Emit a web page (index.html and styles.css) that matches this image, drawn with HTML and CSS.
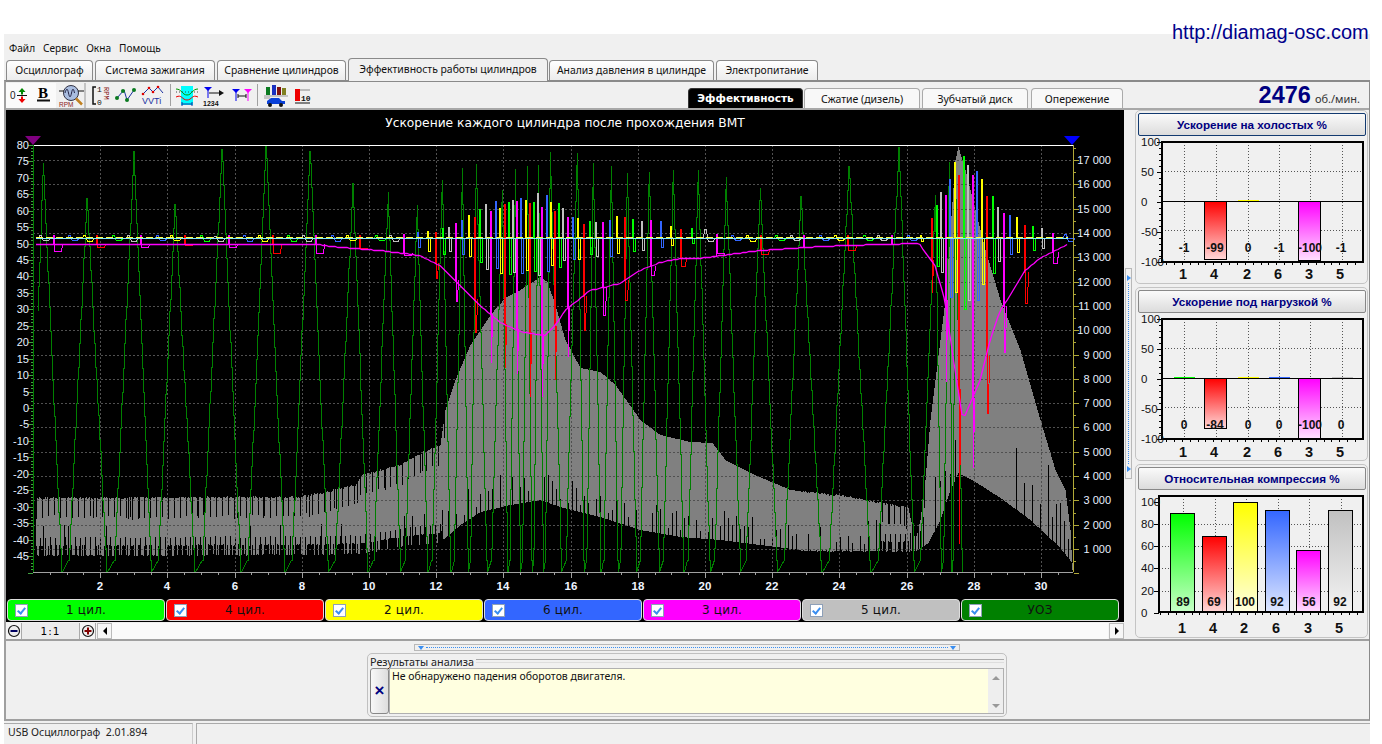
FILE: index.html
```html
<!DOCTYPE html>
<html lang="ru">
<head>
<meta charset="utf-8">
<title>USB Осциллограф</title>
<link rel="stylesheet" href="styles.css">
</head>
<body>
<div class="top-band"><a class="site-link">http://diamag-osc.com</a></div>
<div class="app">
  <nav class="menu"><span>Файл</span><span>Сервис</span><span>Окна</span><span>Помощь</span></nav>
  <div class="tabs">
    <span class="tab w-1">Осциллограф</span>
    <span class="tab w-2">Система зажигания</span>
    <span class="tab w-3">Сравнение цилиндров</span>
    <span class="tab tab-active w-4">Эффективность работы цилиндров</span>
    <span class="tab w-5">Анализ давления в цилиндре</span>
    <span class="tab w-6">Электропитание</span>
  </div>
  <div class="frame">
    <div class="toolbar">
      <div class="tools">
        <span class="tool tool-on w25"><svg width="25" height="24" viewBox="0 0 25 24"><text x="4" y="16" class="ic-num">0</text><path d="M11 12.5h10" class="ic-k"/><path d="M16 5l-3.5 4h2.5v2.5h2V9h2.500z" fill="#080"/><path d="M16 20l-3.5-4h2.500v-2.500h2V16h2.500z" fill="#e00"/></svg></span>
        <span class="tool tool-on w25"><svg width="25" height="24" viewBox="0 0 25 24"><text x="7" y="15" class="ic-b">B</text><path d="M6 17.500h13" class="ic-kk"/></svg></span>
        <span class="tool w30"><svg width="30" height="24" viewBox="0 0 30 24"><circle cx="15" cy="10" r="7.500" fill="#a9bde0" stroke="#334"/><path d="M9 10c1.500-5 2.500-5 3.500 0s2 5 3 0 2-5 3 0" fill="none" stroke="#224"/><path d="M3 8h5M22 8h6" class="ic-k"/><path d="M20 15.500l6 6" stroke="#c08020" stroke-width="2.500"/><text x="3" y="24" class="ic-rpm">RPM</text></svg></span>
        <span class="tool w27 tool-line"><svg width="27" height="24" viewBox="0 0 27 24"><path d="M10 4H7v17h3" fill="none" stroke="#111" stroke-width="1.500"/><text x="11" y="9" class="ic-small">1</text><text x="11" y="22" class="ic-small">0</text><text x="18" y="4" class="ic-rot" transform="rotate(90 18 4)">RPM</text></svg></span>
        <span class="tool w27"><svg width="27" height="24" viewBox="0 0 27 24"><path d="M4 15L11 7l3 10 7-10" fill="none" stroke="#1a30a0"/><circle cx="4" cy="15" r="2" fill="#0a7a20"/><circle cx="10" cy="8" r="2" fill="#0a7a20"/><circle cx="14" cy="17" r="2" fill="#0a7a20"/><circle cx="21" cy="7" r="2" fill="#0a7a20"/></svg></span>
        <span class="tool w27"><svg width="27" height="24" viewBox="0 0 27 24"><path d="M3 11l6-6 4 4 5-5 5 6" fill="none" stroke="#1a30a0"/><circle cx="3" cy="11" r="1.300" fill="#d00"/><circle cx="9" cy="5" r="1.300" fill="#d00"/><circle cx="13" cy="9" r="1.300" fill="#d00"/><circle cx="18" cy="4" r="1.300" fill="#d00"/><text x="2" y="21" class="ic-vvt">VVTi</text></svg></span>
        <span class="tool-sep"></span>
        <span class="tool w27"><svg width="27" height="24" viewBox="0 0 27 24"><rect x="8" y="3" width="12" height="19" fill="#0ff"/><path d="M3 6c6 0 6 6 11 6s5-6 11-6" fill="none" stroke="#090"/><path d="M3 14c6-3 6 3 11 3s5-6 11-3" fill="none" stroke="#e00"/><path d="M3 9h22" stroke="#444" stroke-dasharray="1 2"/><path d="M9 21h10M9 19v4M19 19v4" stroke="#1a30a0"/></svg></span>
        <span class="tool w27"><svg width="27" height="24" viewBox="0 0 27 24"><path d="M4 4h8l-4 4z" fill="#00e"/><path d="M8 5v10" stroke="#00e"/><path d="M9 10h11" class="ic-k"/><path d="M24 10l-5-3v6z" fill="#111"/><text x="3" y="23" class="ic-n1234">1234</text></svg></span>
        <span class="tool w27"><svg width="27" height="24" viewBox="0 0 27 24"><path d="M5 6h8l-4 4z" fill="#00e"/><path d="M9 7v11" stroke="#00e"/><path d="M17 6h8l-4 4z" fill="#f0f"/><path d="M21 7v11" stroke="#f0f"/><path d="M11 13h8M11 11v4M19 11v4" stroke="#111"/></svg></span>
        <span class="tool-sep"></span>
        <span class="tool w30"><svg width="30" height="24" viewBox="0 0 30 24"><rect x="6" y="4" width="4" height="8" fill="#0a7a20"/><rect x="12" y="2" width="4" height="10" fill="#1a30c0"/><rect x="17" y="4" width="4" height="8" fill="#801010"/><rect x="22" y="5" width="4" height="7" fill="#808020"/><path d="M4 13h24M4 15h6" stroke="#999"/><path d="M7 21v-3l4-3h8l3 3h3v3z" fill="#0a40d8"/><circle cx="10" cy="22" r="2" fill="#111"/><circle cx="21" cy="22" r="2" fill="#111"/></svg></span>
        <span class="tool w24"><svg width="24" height="24" viewBox="0 0 24 24"><rect x="5" y="6" width="5" height="12" fill="#e00"/><path d="M5 20h15" class="ic-k"/><path d="M10 7h10" stroke="#888"/><text x="11" y="18" class="ic-ten">10</text></svg></span>
      </div>
      <div class="subtabs">
        <span class="subtab subtab-active s-1">Эффективность</span>
        <span class="subtab s-2">Сжатие (дизель)</span>
        <span class="subtab s-3">Зубчатый диск</span>
        <span class="subtab s-4">Опережение</span>
      </div>
      <div class="rpm"><b>2476</b><span>об./мин.</span></div>
    </div>
    <div class="main">
      <div class="left">
        <div class="scope">
          <svg id="scope-chart" class="scope-svg" width="1118" height="489" viewBox="6 110 1118 489"></svg>
          <div class="series">
            <span class="ser c-green"><i class="check"></i><em>1 цил.</em></span>
            <span class="ser c-red"><i class="check"></i><em>4 цил.</em></span>
            <span class="ser c-yellow"><i class="check"></i><em>2 цил.</em></span>
            <span class="ser c-blue"><i class="check"></i><em>6 цил.</em></span>
            <span class="ser c-magenta"><i class="check"></i><em>3 цил.</em></span>
            <span class="ser c-gray"><i class="check"></i><em>5 цил.</em></span>
            <span class="ser c-dark"><i class="check"></i><em>УОЗ</em></span>
          </div>
        </div>
        <div class="scrollrow">
          <span class="zoom-btn"><svg width="14" height="14" viewBox="0 0 14 14"><circle cx="7" cy="7" r="5.500" class="z-ring"/><path d="M3.500 7h7" class="z-minus"/></svg></span>
          <span class="zoom-val">1:1</span>
          <span class="zoom-btn"><svg width="14" height="14" viewBox="0 0 14 14"><circle cx="7" cy="7" r="5.500" class="z-ring"/><path d="M3.500 7h7M7 3.500v7" class="z-plus"/></svg></span>
          <span class="arrow-btn"><i class="tri-left"></i></span>
          <span class="track"></span>
          <span class="arrow-btn"><i class="tri-right"></i></span>
        </div>
      </div>
      <div class="v-split"><i class="tri-blue-r"></i><span class="dots-v"></span><i class="tri-blue-r"></i></div>
      <div class="right">
        <section class="panel"><h3 class="panel-title panel-title-on">Ускорение на холостых %</h3><svg class="bars" id="bars-1" width="233" height="148" viewBox="1134 136 233 148"></svg></section>
        <section class="panel"><h3 class="panel-title">Ускорение под нагрузкой %</h3><svg class="bars" id="bars-2" width="233" height="148" viewBox="1134 313 233 148"></svg></section>
        <section class="panel"><h3 class="panel-title">Относительная компрессия %</h3><svg class="bars" id="bars-3" width="233" height="148" viewBox="1134 490 233 148"></svg></section>
      </div>
    </div>
    <div class="lower">
      <div class="h-split"><i class="tri-blue-d"></i><span class="dots-h"></span><i class="tri-blue-d"></i></div>
      <div class="results">
        <div class="res-head"><span>Результаты анализа</span><i></i></div>
        <div class="res-body">
          <span class="res-close">×</span>
          <div class="res-text">Не обнаружено падения оборотов двигателя.</div>
          <div class="res-scroll"><i class="tri-up"></i><i class="tri-down"></i></div>
        </div>
      </div>
    </div>
  </div>
  <footer class="status"><span class="st-1">USB Осциллограф&nbsp;&nbsp;2.01.894</span><span class="st-2"></span></footer>
</div>
<script src="chart.js"></script>
</body>
</html>
```

FILE: styles.css
```css
html, body { margin: 0; padding: 0; height: 744px; overflow: hidden; background: #fff; }
body { font-family: "Noto Sans", sans-serif; color: #000; position: relative; }
.top-band { height: 34px; }
.site-link { position: absolute; left: 1172px; top: 20px; font: 20px/24px "Liberation Sans", sans-serif; color: #00008b; z-index: 2; }
.app { width: 1366px; height: 710px; margin-left: 4px; background: #f0f0f0; display: flex; flex-direction: column; }
.menu { height: 24px; display: flex; gap: 8px; align-items: center; padding: 3px 0 0 5px; box-sizing: border-box; font-size: 10.100px; color: #111; }
.tabs { height: 22px; display: flex; gap: 2px; align-items: flex-end; padding-left: 2px; }
.tab { height: 20px; box-sizing: border-box; border: 1.500px solid #8a8a8a; border-bottom: 0; border-radius: 4px 4px 0 0; background: linear-gradient(#fff, #ececec); font-size: 10.400px; line-height: 18px; text-align: center; color: #111; white-space: nowrap; }
.tab-active { height: 23px; line-height: 20px; background: #f0f0f0; border-right: 1.500px solid #8a8a8a; position: relative; z-index: 1; margin-bottom: -1px; }
.w-1 { width: 87px; } .w-2 { width: 120px; } .w-3 { width: 129px; } .w-4 { width: 200px; } .w-5 { width: 165px; margin-left: -1px; } .w-6 { width: 102px; }
.frame { flex: 1; border-top: 2px solid #8a8a8a; border-left: 2px solid #a0a0a0; border-right: 1px solid #8a8a8a; border-bottom: 2px solid #a0a0a0; display: flex; flex-direction: column; }
.toolbar { height: 26px; display: flex; align-items: flex-end; border-bottom: 2px solid #a8a8a8; }
.tools { width: 682px; height: 26px; display: flex; align-items: center; }
.tool { height: 25px; display: flex; align-items: center; }
.tool svg { display: block; }
.tool-on { background: #fafafa; }
.tool-line { border-left: 2px solid #c4c4c4; margin-left: -2px; }
.w25 { width: 25px; } .w30 { width: 30px; } .w27 { width: 27px; } .w24 { width: 24px; }
.tool-sep { width: 1px; height: 22px; margin: 0 2.500px; background: #a0a0a0; }
.ic-num { font: 10px "Liberation Sans", sans-serif; fill: #222; }
.ic-k { stroke: #111; stroke-width: 1; fill: none; }
.ic-kk { stroke: #111; stroke-width: 2; fill: none; }
.ic-b { font: bold 15px "Liberation Serif", serif; fill: #000; }
.ic-rpm { font: 6.500px "Liberation Sans", sans-serif; fill: #8b1a1a; }
.ic-small { font: 8px "Liberation Mono", monospace; fill: #111; }
.ic-rot { font: 7px "Liberation Mono", monospace; fill: #8b1a1a; }
.ic-vvt { font: 9px "Liberation Sans", sans-serif; fill: #1a30a0; }
.ic-n1234 { font: bold 7px "Liberation Sans", sans-serif; fill: #111; }
.ic-ten { font: bold 8px "Liberation Mono", monospace; fill: #111; }
.subtabs { display: flex; height: 20px; gap: 1px; }
.subtab { box-sizing: border-box; height: 20px; border: 1px solid #aaa; border-bottom: 0; border-radius: 4px 4px 0 0; background: #f8f8f8; font-size: 10.500px; line-height: 20px; text-align: center; color: #111; white-space: nowrap; }
.subtab-active { background: #000; color: #fff; font: bold 10.500px/18px "DejaVu Sans", sans-serif; border-color: #333; }
.s-1 { width: 115px; } .s-2 { width: 116px; } .s-3 { width: 106px; margin-left: 1px; } .s-4 { width: 92px; margin-left: 2px; }
.rpm { margin-left: auto; padding-right: 9px; display: flex; align-items: baseline; gap: 4px; align-self: center; }
.rpm b { font: bold 23.500px/26px "Liberation Sans", sans-serif; color: #000080; }
.rpm span { font-size: 11px; color: #333; }
.main { flex: 1; display: flex; }
.left { width: 1118px; flex: none; display: flex; flex-direction: column; }
.scope { height: 512px; background: #000; display: flex; flex-direction: column; }
.scope-svg { display: block; flex: none; }
.series { display: flex; height: 22px; padding-left: 1px; gap: 1px; margin-bottom: 1px; }
.ser { box-sizing: border-box; width: 158px; height: 22px; border: 1px solid #ddd; border-radius: 4px; display: grid; grid-template-columns: 1fr auto 1fr; align-items: center; }
.ser em { font: normal 12px "DejaVu Sans", sans-serif; color: #111; letter-spacing: .2px; }
.check { justify-self: start; margin-left: 7px; width: 13px; height: 13px; box-sizing: border-box; background: #fff; border: 1px solid #8ea0b8; position: relative; }
.check::after { content: ""; position: absolute; left: 3px; top: 1px; width: 3px; height: 6px; border: solid #3a8ef0; border-width: 0 2px 2px 0; transform: rotate(40deg); }
.c-green { background: #0f0; } .c-red { background: #f00; } .c-yellow { background: #ff0; } .c-blue { background: #3366ff; } .c-magenta { background: #f0f; } .c-gray { background: #c0c0c0; } .c-dark { background: #008000; }
.scrollrow { height: 16px; display: flex; align-items: stretch; margin-top: 1px; background: #f4f4f4; }
.zoom-btn { width: 15px; display: flex; align-items: center; justify-content: center; border-right: 1px solid #aaa; }
.zoom-btn svg { display: block; }
.z-ring { fill: #eee; stroke: #111; stroke-width: 1.200; }
.z-minus { stroke: #000060; stroke-width: 2; }
.z-plus { stroke: #800000; stroke-width: 2; }
.zoom-val { width: 57px; text-align: center; font: 10.500px/17px "DejaVu Sans", sans-serif; background: #ececec; border-right: 1px solid #aaa; letter-spacing: 1px; }
.arrow-btn { width: 15px; margin-left: 1px; display: flex; align-items: center; justify-content: center; border: 1px solid #bbb; box-sizing: border-box; background: #f6f6f6; }
.track { flex: 1; background: #fafafa; }
.tri-left { border: 4px solid transparent; border-right: 4px solid #000; border-left: 0; }
.tri-right { border: 4px solid transparent; border-left: 4px solid #000; border-right: 0; }
.v-split { width: 7px; margin: 158px 3px 0 1px; height: 211px; box-sizing: border-box; border: 1px solid #b8b8b8; display: flex; flex-direction: column; align-items: center; padding: 6px 0; }
.dots-v { flex: 1; border-left: 1px dotted #3a8ef0; margin: 2px 0; }
.tri-blue-r { border: 3px solid transparent; border-left: 4px solid #3a8ef0; border-right: 0; }
.right { width: 233px; display: flex; flex-direction: column; gap: 3px; }
.panel { box-sizing: border-box; height: 174px; border: 1px solid #c4c4c4; border-radius: 5px; display: flex; flex-direction: column; padding-top: 2px; position: relative; }
.panel-title { box-sizing: border-box; margin: 0 1px 0 2px; height: 23px; border: 1px solid #888; border-radius: 2px; background: linear-gradient(#fafafa, #dcdcdc); font: bold 11.700px/21px "Liberation Sans", sans-serif; color: #000080; text-align: center; flex: none; }
.panel-title-on { border-color: #123a70; }
.bars { display: block; margin: 0 -1px; flex: none; }
.ax { font: 11.500px "Liberation Sans", sans-serif; fill: #111; }
.val { font: bold 12px "Liberation Sans", sans-serif; fill: #111; text-anchor: middle; }
.cat { font: bold 14.500px "Liberation Sans", sans-serif; fill: #111; text-anchor: middle; }
.lab { font: 11px "Liberation Sans", sans-serif; fill: #e8f0ff; }
.lab-x { font: bold 11.500px "Liberation Sans", sans-serif; fill: #eef4ff; text-anchor: middle; }
.scope-title { font: 12.250px "DejaVu Sans", sans-serif; fill: #fff; text-anchor: middle; }
.lower { height: 80px; margin-top: -1px; border-top: 2px solid #a0a0a0; display: flex; flex-direction: column; box-sizing: border-box; }
.h-split { box-sizing: border-box; width: 546px; height: 7px; margin: 3px 0 2px 408px; border: 1px solid #b8b8b8; display: flex; align-items: center; padding: 0 3px; }
.dots-h { flex: 1; border-top: 1px dotted #3a8ef0; margin: 0 2px; }
.tri-blue-d { border: 3px solid transparent; border-top: 4px solid #3a8ef0; border-bottom: 0; }
.results { box-sizing: border-box; width: 640px; height: 64px; margin-left: 361px; border: 1px solid #c0c0c0; border-radius: 5px; padding: 0 2px; display: flex; flex-direction: column; }
.res-head { height: 14px; display: flex; align-items: center; gap: 2px; font-size: 10.800px; color: #222; white-space: nowrap; }
.res-head i { flex: 1; height: 2px; border-top: 1px solid #aaa; border-bottom: 1px solid #ddd; }
.res-body { flex: 1; display: flex; margin-bottom: 2px; }
.res-close { width: 19px; box-sizing: border-box; border: 1px solid #888; border-radius: 3px; background: linear-gradient(90deg, #f8f8f8, #ddd); display: flex; align-items: center; justify-content: center; color: #000080; font: bold 17px "Liberation Sans", sans-serif; }
.res-text { flex: 1; background: #ffffe0; border: 1px solid #b0b0b0; border-right: 0; font-size: 10.500px; line-height: 14px; padding-left: 2px; color: #111; }
.res-scroll { width: 16px; background: #eee; border: 1px solid #b0b0b0; border-left: 0; display: flex; flex-direction: column; justify-content: space-between; align-items: center; padding: 7px 0 5px; box-sizing: border-box; }
.tri-up { border: 4px solid transparent; border-bottom: 4px solid #999; border-top: 0; }
.tri-down { border: 4px solid transparent; border-top: 4px solid #999; border-bottom: 0; }
.status { height: 21px; margin-top: 2px; display: flex; gap: 3px; font-size: 10.500px; color: #222; }
.st-1 { width: 189px; box-sizing: border-box; border-top: 1px solid #aaa; border-right: 1px solid #ccc; padding: 1px 0 0 4px; white-space: pre; }
.st-2 { flex: 1; border-top: 1px solid #aaa; border-left: 1px solid #aaa; }
```

FILE: chart.js
```js
(function () {
  var seed = 90210;
  function rnd() {
    seed = (seed + 0x6D2B79F5) | 0;
    var t = Math.imul(seed ^ (seed >>> 15), 1 | seed);
    t = (t + Math.imul(t ^ (t >>> 7), 61 | t)) ^ t;
    return ((t ^ (t >>> 14)) >>> 0) / 4294967296;
  }
  function pw(p, x) {
    if (x <= p[0][0]) return p[0][1];
    for (var i = 1; i < p.length; i++) {
      if (x <= p[i][0]) {
        var a = p[i - 1], b = p[i];
        return a[1] + (b[1] - a[1]) * (x - a[0]) / (b[0] - a[0]);
      }
    }
    return p[p.length - 1][1];
  }
  var X0 = 33, X1 = 1073, Y0 = 145, Y1 = 572, BASE = 238.5;
  var out = [];

  /* grey rpm mass */
  var TOP = [[36,498],[300,497],[330,491],[355,485],[362,475],[400,465],[425,451],[440,445],[445,410],[455,380],[470,345],[490,315],[505,298],[520,290],[540,277],[547,282],[555,305],[565,340],[580,368],[600,372],[615,385],[640,420],[660,435],[690,442],[712,443],[725,460],[750,473],[790,490],[850,497],[908,508],[915,540],[920,520],[925,480],[930,420],[945,300],[955,160],[958,147],[965,170],[975,210],[985,250],[1000,300],[1020,350],[1040,420],[1055,470],[1065,490],[1070,530],[1072,570]];
  var BOT = [[36,555],[300,554],[360,553],[400,546],[440,542],[460,525],[480,512],[510,505],[540,500],[560,507],[600,517],[640,530],[680,537],[720,540],[800,550],[915,551],[928,543],[940,520],[950,490],[958,473],[975,482],[1000,498],[1030,520],[1060,548],[1072,563]];
  var gray = '', black = '', x;
  for (x = 36; x <= 1072; x++) {
    var flat = x < 440 || (x > 800 && x < 925);
    var t = Math.round(pw(TOP, x) + (flat ? rnd() * 2 - 1 : 0));
    var b = Math.round(pw(BOT, x) + (flat ? rnd() * 1.500 : 0));
    var px = x + 0.5;
    gray += 'M' + px + ' ' + t + 'V' + b;
    var dense = x < 445 || (x > 880 && x < 925);
    if (dense) {
      if (x % 6 === 0 || rnd() < 0.06) black += 'M' + px + ' ' + t + 'V' + (t + 18 + rnd() * 3);
      if (rnd() < 0.55) black += 'M' + px + ' ' + (b - 10) + 'V' + b;
      if (x % 5 === 0) black += 'M' + px + ' ' + (b - 18) + 'V' + b;
      if (rnd() < 0.02) black += 'M' + px + ' ' + (b - 30) + 'V' + b;
    } else if (x < 930) {
      if (x % 4 === 0 && rnd() < 0.7) black += 'M' + px + ' ' + (b - 6 - rnd() * 26) + 'V' + b;
    } else if (x > 1010 && x < 1072) {
      if (x % 8 === 0 || (x > 1045 && x % 4 === 0)) black += 'M' + px + ' ' + (b - 10 - rnd() * (b - t - 20) * 0.9) + 'V' + b;
    } else if (x > 930 && x < 956 && x % 5 === 0) {
      black += 'M' + px + ' ' + (b - 5 - rnd() * 50) + 'V' + b;
    }
  }
  out.push('<path d="' + gray + '" stroke="#808080" fill="none" shape-rendering="crispEdges"/>');
  out.push('<path d="' + black + '" stroke="#000" fill="none" shape-rendering="crispEdges"/>');

  /* grid */
  var g = '';
  var i;
  for (i = 2; i <= 30; i += 2) {
    var gx = Math.round(X0 + 33.6 * i) + 0.5;
    g += 'M' + gx + ' ' + Y0 + 'V' + Y1;
  }
  for (i = 1; i <= 17; i++) {
    var gy = Math.round(573.3 - 24.3 * i) + 0.5;
    g += 'M' + X0 + ' ' + gy + 'H' + X1;
  }
  out.push('<path d="' + g + '" stroke="#505050" stroke-dasharray="2 2" fill="none" shape-rendering="crispEdges"/>');

  /* green timing saw */
  var PK = [[43,163],[87,198],[134,151],[175,204],[222,149],[266,146],[310,151],[353,183],[388,192],[417,205],[442,180],[462,168],[476,164],[502,190],[515,169],[527,166],[538,165],[550,152],[577,153],[593,163],[611,166],[627,173],[649,172],[673,170],[698,170],[726,177],[760,188],[801,196],[849,166],[899,147],[935,195],[949,162],[955,163]];
  function seg(x1, y1, x2, y2) {
    var s = '', n = Math.max(2, Math.round(Math.abs(y2 - y1) / 12)), cx = Math.round(x1);
    for (var k = 1; k <= n; k++) {
      var ny = Math.round(y1 + (y2 - y1) * k / n);
      var nx = Math.round(x1 + (x2 - x1) * k / n);
      s += ' L' + (cx + 0.5) + ' ' + ny;
      if (nx !== cx) s += ' L' + (nx + 0.5) + ' ' + ny;
      cx = nx;
    }
    return s;
  }
  var gp = 'M38.5 311 ' + seg(38, 311, 43, 163);
  for (i = 0; i < PK.length - 1; i++) {
    var a = PK[i], c = PK[i + 1], gap = Math.min(7, (c[0] - a[0]) * 0.15), hw = (c[0] - a[0] - gap) / 2;
    gp += seg(a[0], a[1], a[0] + hw, Y1) + seg(a[0] + hw + gap, Y1, c[0], c[1]);
  }
  gp += seg(955, 163, 962, Y1);
  out.push('<path d="' + gp + '" stroke="#008000" fill="none" shape-rendering="crispEdges"/>');

  /* cylinder traces */
  var PITCH = [[36,14.6],[400,14.6],[430,7],[470,6],[500,4.2],[560,4.2],[580,6],[620,8],[680,11],[720,14.6],[915,14.6],[930,4.5],[970,4.5],[1000,6],[1040,10],[1070,14]];
  var UP = [[36,3],[395,3],[430,8],[447,11],[455,18],[462,21],[470,25],[485,31],[498,36],[510,39],[525,43],[540,45],[550,38],[560,33],[580,18],[600,20],[620,24],[650,20],[680,12],[710,8],[720,3],[920,3],[930,20],[938,40],[950,70],[960,76],[966,76],[982,53],[997,36],[1011,25],[1022,18],[1028,15],[1045,8],[1066,3]];
  var DN = [[36,2.5],[395,3],[420,10],[447,15],[460,17],[490,32],[515,32],[540,37],[570,20],[640,14],[680,6],[720,2.5],[920,2.5],[935,30],[960,75],[975,70],[990,32],[1005,20],[1040,10],[1066,3]];
  var DEEP = [[36,248],[395,250],[420,270],[447,283],[463,318],[480,341],[491,361],[514,370],[528,395],[540,400],[553,380],[566,355],[578,332],[595,315],[612,308],[630,290],[653,277],[676,272],[700,257],[760,252],[820,248],[900,248],[925,258],[935,310],[948,400],[958,545],[965,520],[978,423],[986,417],[999,368],[1013,325],[1030,287],[1060,255],[1068,248]];
  var CURVE = [[36,244],[318,244],[330,246],[380,250],[420,255],[440,265],[460,285],[480,305],[500,322],[520,331],[545,335],[555,325],[565,310],[590,290],[620,283],[640,270],[660,262],[680,258],[700,258],[760,250],[820,246],[880,244],[919,243],[935,265],[945,300],[955,370],[963,420],[970,403],[980,380],[990,340],[1000,310],[1010,295],[1025,270],[1040,258],[1055,250],[1068,244]];
  var ORDER = [
    { c: '#c0c0c0', k: 0 }, { c: '#ff00ff', k: 1, low: 1 }, { c: '#3366ff', k: 2 },
    { c: '#ffff00', k: 3 }, { c: '#ff0000', k: 4, low: 1 }, { c: '#00ff00', k: 5 }
  ];
  var paths = {};
  ORDER.forEach(function (o) { paths[o.k] = o.low ? '' : 'M36.5 ' + BASE; });
  var slot = 0, px0 = 38;
  while (px0 < 1064) {
    var pitch = pw(PITCH, px0);
    var o = ORDER[slot % 6], xs = Math.round(px0);
    var up = pw(UP, px0) * (0.8 + rnd() * 0.3), dn = pw(DN, px0) * (0.8 + rnd() * 0.35);
    var s = '';
    if (o.low) {
      var base = Math.round(pw(CURVE, xs)) + 0.5;
      var deep = Math.round(pw(DEEP, xs) + rnd() * 8 - 4);
      var wl = pitch > 12 ? 9 : Math.max(2, Math.round(pitch * 0.5));
      var topY = pitch > 12 ? BASE - up : BASE - up * 0.85;
      s += ' M' + (xs + 0.5) + ' ' + base + ' L' + (xs + 0.5) + ' ' + topY;
      s += ' L' + (xs + 1.5) + ' ' + topY + ' L' + (xs + 1.5) + ' ' + deep;
      s += ' L' + (xs + wl - 0.5) + ' ' + deep + ' L' + (xs + wl + 0.5) + ' ' + base;
    } else if (pitch > 12) {
      var t1 = BASE - up, d1 = BASE + dn;
      s += ' L' + (xs + 0.5) + ' ' + BASE + ' L' + (xs + 1.5) + ' ' + t1 + ' L' + (xs + 3.5) + ' ' + t1 + ' L' + (xs + 4.5) + ' ' + BASE;
      s += ' L' + (xs + 5.5) + ' ' + d1 + ' L' + (xs + 10.5) + ' ' + d1 + ' L' + (xs + 11.5) + ' ' + BASE;
    } else {
      var t2 = BASE - up, d2 = BASE + dn;
      s += ' L' + (xs + 0.5) + ' ' + BASE + ' L' + (xs + 0.5) + ' ' + t2 + ' L' + (xs + 1.5) + ' ' + t2 + ' L' + (xs + 1.5) + ' ' + d2;
      s += ' L' + (xs + 3.5) + ' ' + d2 + ' L' + (xs + 3.5) + ' ' + BASE;
    }
    paths[o.k] += s;
    px0 += pitch;
    slot++;
  }
  ORDER.forEach(function (o) {
    if (o.low) return;
    out.push('<path d="' + paths[o.k] + ' L1067.5 ' + BASE + '" stroke="' + o.c + '" fill="none" shape-rendering="crispEdges"/>');
  });
  ORDER.forEach(function (o) {
    if (!o.low) return;
    out.push('<path d="' + paths[o.k] + '" stroke="' + o.c + '" fill="none" shape-rendering="crispEdges"/>');
  });
  /* flat centre line */
  out.push('<path d="M36 237.500H1068" stroke="#ffff40" stroke-dasharray="7 3" shape-rendering="crispEdges"/>');
  out.push('<path d="M36 238.500H1068" stroke="#80e8ff" shape-rendering="crispEdges"/>');
  /* smooth magenta */
  var cv = 'M36 244.500';
  for (x = 38; x <= 1068; x += 3) {
    cv += ' L' + x + ' ' + (Math.round(pw(CURVE, x)) + 0.5);
  }
  out.push('<path d="' + cv + '" stroke="#ff00ff" stroke-width="1.300" fill="none"/>');

  /* axes */
  out.push('<path d="M33 145.500H1073" stroke="#fff" shape-rendering="crispEdges"/>');
  out.push('<path d="M33.500 145V572" stroke="#008000" shape-rendering="crispEdges"/>');
  out.push('<path d="M1073.500 145V572" stroke="#b0a838" shape-rendering="crispEdges"/>');
  out.push('<path d="M33 572.500H1073" stroke="#a0a0a0" shape-rendering="crispEdges"/>');
  var ticks = '', v, ty;
  for (v = -50; v <= 80; v++) {
    ty = Math.round(408 - 3.29 * v) + 0.5;
    ticks += 'M' + (v % 5 === 0 ? 28 : 31) + ' ' + ty + 'H33';
  }
  out.push('<path d="' + ticks + '" stroke="#40a040" shape-rendering="crispEdges"/>');
  for (v = 80; v >= -45; v -= 5) {
    out.push('<text class="lab" x="29" y="' + (Math.round(408 - 3.29 * v) + 4) + '" text-anchor="end">' + v + '</text>');
  }
  ticks = '';
  for (v = 0; v <= 17.5; v += 0.5) {
    ty = Math.round(573.3 - 24.3 * v) + 0.5;
    ticks += 'M1074 ' + ty + 'H' + (v % 1 === 0 ? 1079 : 1076);
  }
  out.push('<path d="' + ticks + '" stroke="#b0a838" shape-rendering="crispEdges"/>');
  for (v = 1; v <= 17; v++) {
    out.push('<text class="lab" x="1111" y="' + (Math.round(573.3 - 24.3 * v) + 4) + '" text-anchor="end">' + v + ' 000</text>');
  }
  ticks = '';
  for (v = 0.5; v <= 30.5; v += 0.5) {
    var tx = Math.round(X0 + 33.6 * v) + 0.5;
    ticks += 'M' + tx + ' 573V' + (v % 2 === 0 ? 578 : 575);
  }
  out.push('<path d="' + ticks + '" stroke="#a0a0a0" shape-rendering="crispEdges"/>');
  for (v = 2; v <= 30; v += 2) {
    out.push('<text class="lab-x" x="' + Math.round(X0 + 33.6 * v) + '" y="590">' + v + '</text>');
  }
  out.push('<path d="M25 136H41L33 145z" fill="#800080"/>');
  out.push('<path d="M1064 136H1080L1072 145z" fill="#0000ff"/>');
  out.push('<text class="scope-title" x="565" y="127">Ускорение каждого цилиндра после прохождения ВМТ</text>');
  document.getElementById('scope-chart').innerHTML = out.join('');

  /* bar panels */
  var GRADS = [['g', '#00ff00', '#c8ffc8'], ['r', '#ff0000', '#ffd8d8'], ['y', '#ffff00', '#ffffe0'], ['b', '#3366ff', '#dfe8ff'], ['m', '#ff00ff', '#ffe0ff'], ['s', '#c0c0c0', '#f4f4f4']];
  var CAT = ['1', '4', '2', '6', '3', '5'];
  function defs(id) {
    return '<defs>' + GRADS.map(function (d) {
      return '<linearGradient id="' + id + d[0] + '" x1="0" y1="0" x2="0" y2="1"><stop offset="0" stop-color="' + d[1] + '"/><stop offset="1" stop-color="' + d[2] + '"/></linearGradient>';
    }).join('') + '</defs>';
  }
  function signed(id, top, bottom, zero, vals, deep, valY, catY) {
    var s = [defs(id)], cx = [1183, 1215, 1247, 1278, 1309, 1341], lx = [1182, 1213, 1246, 1277, 1308, 1339];
    var grid = '';
    cx.forEach(function (c) { grid += 'M' + (c + 0.5) + ' ' + top + 'V' + bottom; });
    grid += 'M1161 ' + (zero - 29.5) + 'H1362M1161 ' + (zero + 29.5) + 'H1362';
    s.push('<path d="' + grid + '" stroke="#555" stroke-dasharray="1 2" fill="none" shape-rendering="crispEdges"/>');
    vals.forEach(function (v, i) {
      var c = cx[i], col = GRADS[i], d = deep[i];
      if (d > 2) {
        s.push('<rect x="' + (c - 11.5) + '" y="' + (zero + 0.5) + '" width="22" height="' + d + '" fill="url(#' + id + col[0] + ')" stroke="#000" shape-rendering="crispEdges"/>');
      } else if (d < 0) {
        s.push('<rect x="' + (c - 10) + '" y="' + (zero - 1) + '" width="21" height="1" fill="' + col[1] + '" shape-rendering="crispEdges"/>');
      }
    });
    s.push('<path d="M1161 ' + (zero + 0.5) + 'H1362" stroke="#000" shape-rendering="crispEdges"/>');
    s.push('<rect x="1161" y="' + top + '" width="201" height="' + (bottom - top) + '" fill="none" stroke="#000" stroke-width="1.500" shape-rendering="crispEdges"/>');
    var t = '';
    for (var k = 0; k <= 4; k++) { t += 'M1156 ' + (top + 0.5 + (bottom - top) * k / 4) + 'H1161'; }
    for (var kk = 0; kk <= 20; kk++) { t += 'M1158 ' + (top + 0.5 + (bottom - top) * kk / 20) + 'H1161'; }
    for (var m = 0; m <= 24; m++) { t += 'M' + (1165.5 + m * 7.88) + ' ' + bottom + 'v3'; }
    s.push('<path d="' + t + '" stroke="#000" shape-rendering="crispEdges"/>');
    [100, 50, 0, -50, -100].forEach(function (a, k) {
      s.push('<text class="ax" x="1140" y="' + (top + (bottom - top) * k / 4 + 4) + '">' + a + '</text>');
    });
    vals.forEach(function (v, i) {
      s.push('<text class="val" x="' + (lx[i] + 1) + '" y="' + valY + '">' + v + '</text>');
      s.push('<text class="cat" x="' + lx[i] + '" y="' + catY + '">' + CAT[i] + '</text>');
    });
    document.getElementById(id).innerHTML = s.join('');
  }
  signed('bars-1', 142, 262, 201, [-1, -99, 0, -1, -100, -1], [0, 58, -1, 0, 59, 0], 252, 279);
  signed('bars-2', 319, 439, 378, [0, -84, 0, 0, -100, 0], [-1, 50, -1, -1, 60, -1], 429, 457);

  (function () {
    var id = 'bars-3', s = [defs(id)], top = 496, bottom = 612;
    var cx = [1182, 1214, 1245, 1277, 1308, 1340], lx = [1181, 1212, 1243, 1275, 1307, 1338];
    var tops = [513, 536, 502, 510, 550, 510], vals = [89, 69, 100, 92, 56, 92];
    var grid = '';
    cx.forEach(function (c) { grid += 'M' + (c + 0.5) + ' ' + top + 'V' + bottom; });
    [524, 546, 568, 591].forEach(function (y) { grid += 'M1158 ' + (y + 0.5) + 'H1362'; });
    s.push('<path d="' + grid + '" stroke="#555" stroke-dasharray="1 2" fill="none" shape-rendering="crispEdges"/>');
    vals.forEach(function (v, i) {
      s.push('<rect x="' + (cx[i] - 12.5) + '" y="' + (tops[i] + 0.5) + '" width="24" height="' + (bottom - tops[i]) + '" fill="url(#' + id + GRADS[i][0] + ')" stroke="#000" shape-rendering="crispEdges"/>');
    });
    s.push('<rect x="1158" y="' + top + '" width="204" height="' + (bottom - top) + '" fill="none" stroke="#000" stroke-width="1.500" shape-rendering="crispEdges"/>');
    var t = '';
    [502, 524, 546, 568, 591, 613].forEach(function (y) { t += 'M1153 ' + (y + 0.5) + 'H1158'; });
    for (var m = 0; m <= 25; m++) { t += 'M' + (1159.5 + m * 7.88) + ' ' + bottom + 'v3'; }
    s.push('<path d="' + t + '" stroke="#000" shape-rendering="crispEdges"/>');
    [[100, 502], [80, 524], [60, 546], [40, 568], [20, 591], [0, 613]].forEach(function (a) {
      s.push('<text class="ax" x="1140" y="' + (a[1] + 4) + '">' + a[0] + '</text>');
    });
    vals.forEach(function (v, i) {
      s.push('<text class="val" x="' + (lx[i] + 1) + '" y="605.500">' + v + '</text>');
      s.push('<text class="cat" x="' + lx[i] + '" y="633">' + CAT[i] + '</text>');
    });
    document.getElementById(id).innerHTML = s.join('');
  })();
})();
```
